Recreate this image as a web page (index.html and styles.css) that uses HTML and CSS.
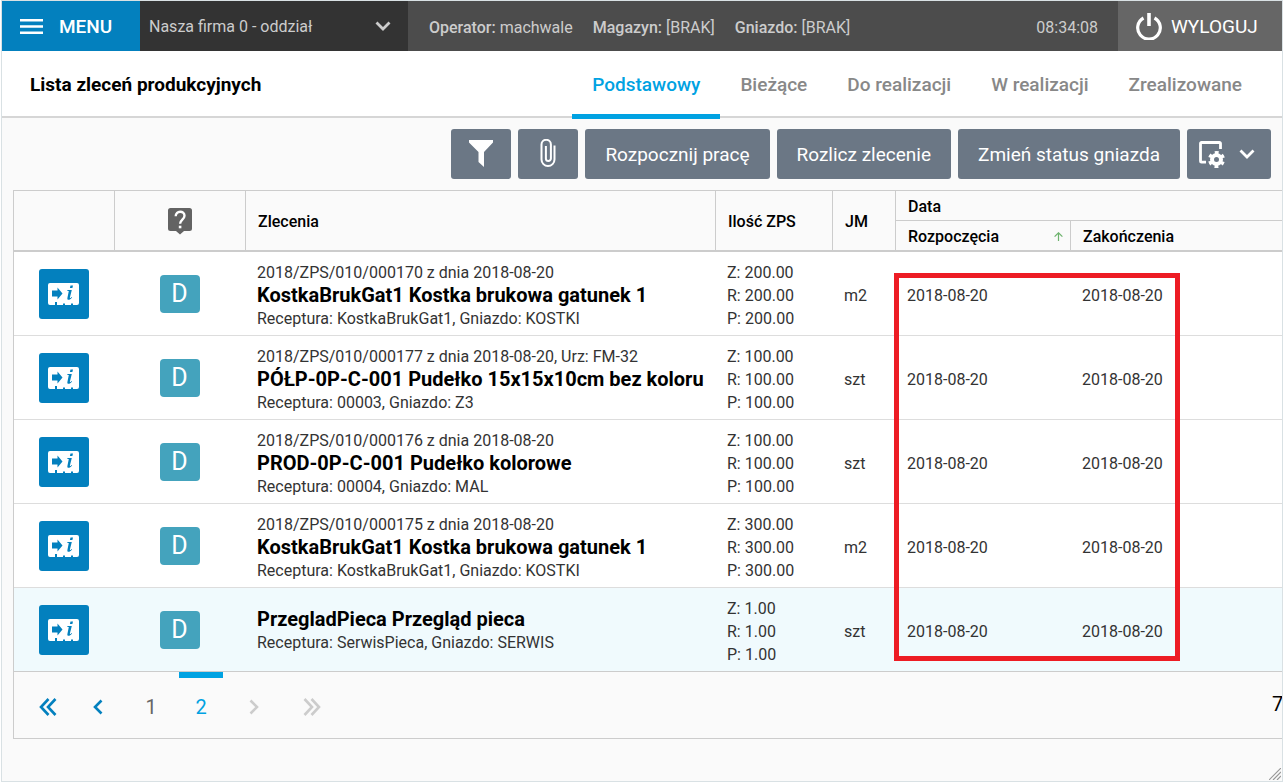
FILE: index.html
```html
<!DOCTYPE html>
<html lang="pl">
<head>
    <meta charset="UTF-8">
    <title>Lista zleceń produkcyjnych</title>
    <meta name="viewport" content="width=device-width, initial-scale=1">
    <link rel="stylesheet" href="styles.css">
</head>
<body>
    <!-- shared icons -->
    <svg class="sprite" aria-hidden="true">
        <symbol id="ticket" viewBox="0 0 31 22">
            <path fill="#fff" d="M2 0h27a2 2 0 0 1 2 2v18a2 2 0 0 1-2 2h-4v-1.500h-2v1.500h-6v-1.500h-2v1.500H9v-3H7v3H2a2 2 0 0 1-2-2V2a2 2 0 0 1 2-2z"/>
            <path fill="#0380be" d="M4 7.500h5.500v-3l5 6-5 6v-3H4z"/>
            <path fill="#0380be" d="M22.500 2.500h2.500l-.6 2.600h-2.500zM19.500 7h4.300l-1.900 7.500c-.2.900.4.900 1.700-.6l.5.500c-2.500 3.300-5.200 3-4.700.5L20.800 8h-1.500z"/>
        </symbol>
        <symbol id="chevron" viewBox="0 0 16 10">
            <path fill="none" stroke="currentColor" stroke-width="2.800" d="M1.500 1.500 8 8l6.500-6.500"/>
        </symbol>
    </svg>

    <div class="frame">
        <header class="topbar">
            <button type="button" class="menu">
                <svg width="23" height="15" viewBox="0 0 23 15"><path fill="#fff" d="M0 0h23v2.500H0zM0 6.250h23v2.500H0zM0 12.500h23V15H0z"/></svg>
                MENU
            </button>
            <div class="company">
                <select aria-label="Firma">
                    <option>Nasza firma 0 - oddział</option>
                </select>
                <svg class="arrow" width="16" height="10"><use href="#chevron"/></svg>
            </div>
            <div class="info">
                <span><b>Operator:</b> machwale</span>
                <span><b>Magazyn:</b> [BRAK]</span>
                <span><b>Gniazdo:</b> [BRAK]</span>
                <span class="clock">08:34:08</span>
            </div>
            <button type="button" class="logout">
                <svg width="26" height="27" viewBox="0 0 26 27"><path fill="none" stroke="#fff" stroke-width="3.200" d="M7.500 5a11.300 11.300 0 1 0 11 0"/><path fill="#fff" d="M11.200 0h3.600v13h-3.600z"/></svg>
                WYLOGUJ
            </button>
        </header>

        <div class="titlebar">
            <h1>Lista zleceń produkcyjnych</h1>
            <nav class="tabs">
                <a href="#" class="active">Podstawowy</a>
                <a href="#">Bieżące</a>
                <a href="#">Do realizacji</a>
                <a href="#">W realizacji</a>
                <a href="#">Zrealizowane</a>
            </nav>
        </div>

        <div class="toolbar">
            <button type="button" class="icon-btn" aria-label="Filtr">
                <svg width="24" height="27" viewBox="0 0 24 27"><path fill="#fff" d="M0 0h24v2.500L15 12v15l-5.500-5V12L0 2.500z"/></svg>
            </button>
            <button type="button" class="icon-btn" aria-label="Załączniki">
                <svg width="16" height="28" viewBox="0 0 16 28"><path fill="none" stroke="#fff" stroke-width="2" d="M14.500 6.500v14a6.500 6.500 0 0 1-13 0V5.500a4.700 4.700 0 0 1 9.400 0v14a2.500 2.500 0 0 1-5 0V7"/></svg>
            </button>
            <button type="button">Rozpocznij pracę</button>
            <button type="button">Rozlicz zlecenie</button>
            <button type="button">Zmień status gniazda</button>
            <button type="button" class="settings" aria-label="Ustawienia">
                <svg width="27" height="27" viewBox="0 0 27 27">
                    <path fill="none" stroke="#fff" stroke-width="2.800" stroke-linejoin="round" d="M21.500 8V2.500a1 1 0 0 0-1-1h-18a1 1 0 0 0-1 1v17.700a1 1 0 0 0 1 1H7"/>
                    <circle cx="17.500" cy="18.500" r="4.500" fill="none" stroke="#fff" stroke-width="4"/>
                    <circle cx="17.500" cy="18.500" r="7" fill="none" stroke="#fff" stroke-width="3" stroke-dasharray="3.665" stroke-dashoffset="1.833" transform="rotate(30 17.500 18.500)"/>
                </svg>
                <svg width="16" height="10"><use href="#chevron"/></svg>
            </button>
        </div>

        <main class="grid">
            <table>
                <colgroup>
                    <col class="c-action"><col class="c-status"><col class="c-order"><col class="c-qty"><col class="c-unit"><col class="c-date"><col>
                </colgroup>
                <thead>
                    <tr>
                        <th rowspan="2"></th>
                        <th rowspan="2" class="center">
                            <svg width="24" height="27" viewBox="0 0 24 27" role="img" aria-label="Status">
                                <path fill="#636363" d="M2.500 0h19A2.500 2.500 0 0 1 24 2.500v18a2.500 2.500 0 0 1-2.500 2.500H16l-4 3.500L8 23H2.500A2.500 2.500 0 0 1 0 20.500v-18A2.500 2.500 0 0 1 2.500 0z"/>
                                <path fill="none" stroke="#fff" stroke-width="2.400" d="M7.700 8.300c0-6 8.800-6 8.800-.6 0 3.800-4.400 4-4.400 8"/>
                                <path fill="#fff" d="M10.800 17.700h2.600v2.600h-2.600z"/>
                            </svg>
                        </th>
                        <th rowspan="2">Zlecenia</th>
                        <th rowspan="2">Ilość ZPS</th>
                        <th rowspan="2">JM</th>
                        <th colspan="2" class="group">Data</th>
                    </tr>
                    <tr>
                        <th><span class="sorted">Rozpoczęcia
                            <svg width="9" height="9" viewBox="0 0 9 9"><path fill="none" stroke="#6db36d" stroke-width="1.200" d="M4.500 9V1M.6 4.700 4.500.8l3.900 3.900"/></svg></span>
                        </th>
                        <th>Zakończenia</th>
                    </tr>
                </thead>
                <tbody>
                    <tr>
                        <td class="center"><button type="button" class="details" aria-label="Szczegóły"><svg width="31" height="22"><use href="#ticket"/></svg></button></td>
                        <td class="center"><span class="badge">D</span></td>
                        <td>2018/ZPS/010/000170 z dnia 2018-08-20<strong>KostkaBrukGat1 Kostka brukowa gatunek 1</strong>Receptura: KostkaBrukGat1, Gniazdo: KOSTKI</td>
                        <td>Z: 200.00<br>R: 200.00<br>P: 200.00</td>
                        <td>m2</td>
                        <td>2018-08-20</td>
                        <td>2018-08-20</td>
                    </tr>
                    <tr>
                        <td class="center"><button type="button" class="details" aria-label="Szczegóły"><svg width="31" height="22"><use href="#ticket"/></svg></button></td>
                        <td class="center"><span class="badge">D</span></td>
                        <td>2018/ZPS/010/000177 z dnia 2018-08-20, Urz: FM-32<strong>PÓŁP-0P-C-001 Pudełko 15x15x10cm bez koloru</strong>Receptura: 00003, Gniazdo: Z3</td>
                        <td>Z: 100.00<br>R: 100.00<br>P: 100.00</td>
                        <td>szt</td>
                        <td>2018-08-20</td>
                        <td>2018-08-20</td>
                    </tr>
                    <tr>
                        <td class="center"><button type="button" class="details" aria-label="Szczegóły"><svg width="31" height="22"><use href="#ticket"/></svg></button></td>
                        <td class="center"><span class="badge">D</span></td>
                        <td>2018/ZPS/010/000176 z dnia 2018-08-20<strong>PROD-0P-C-001 Pudełko kolorowe</strong>Receptura: 00004, Gniazdo: MAL</td>
                        <td>Z: 100.00<br>R: 100.00<br>P: 100.00</td>
                        <td>szt</td>
                        <td>2018-08-20</td>
                        <td>2018-08-20</td>
                    </tr>
                    <tr>
                        <td class="center"><button type="button" class="details" aria-label="Szczegóły"><svg width="31" height="22"><use href="#ticket"/></svg></button></td>
                        <td class="center"><span class="badge">D</span></td>
                        <td>2018/ZPS/010/000175 z dnia 2018-08-20<strong>KostkaBrukGat1 Kostka brukowa gatunek 1</strong>Receptura: KostkaBrukGat1, Gniazdo: KOSTKI</td>
                        <td>Z: 300.00<br>R: 300.00<br>P: 300.00</td>
                        <td>m2</td>
                        <td>2018-08-20</td>
                        <td>2018-08-20</td>
                    </tr>
                    <tr class="selected">
                        <td class="center"><button type="button" class="details" aria-label="Szczegóły"><svg width="31" height="22"><use href="#ticket"/></svg></button></td>
                        <td class="center"><span class="badge">D</span></td>
                        <td><strong>PrzegladPieca Przegląd pieca</strong>Receptura: SerwisPieca, Gniazdo: SERWIS</td>
                        <td>Z: 1.00<br>R: 1.00<br>P: 1.00</td>
                        <td>szt</td>
                        <td>2018-08-20</td>
                        <td>2018-08-20</td>
                    </tr>
                </tbody>
            </table>

            <nav class="pager">
                <div class="prev">
                    <a href="#" aria-label="Pierwsza"><svg width="18" height="18" viewBox="0 0 18 18"><path d="M9.500 1 2 9l7.500 8M16.500 1 9 9l7.500 8"/></svg></a>
                    <a href="#" aria-label="Poprzednia"><svg width="10" height="16" viewBox="0 0 10 16"><path d="M8.500 1.500 2 8l6.500 6.500"/></svg></a>
                </div>
                <div class="pages">
                    <a href="#">1</a>
                    <a href="#" class="current">2</a>
                </div>
                <div class="next">
                    <a href="#" aria-label="Następna"><svg width="10" height="16" viewBox="0 0 10 16"><path d="M1.500 1.500 8 8l-6.500 6.500"/></svg></a>
                    <a href="#" aria-label="Ostatnia"><svg width="18" height="18" viewBox="0 0 18 18"><path d="M1.500 1 9 9l-7.500 8M8.500 1 16 9l-7.500 8"/></svg></a>
                </div>
                <span class="total">7</span>
            </nav>

            <div class="marker"></div>
        </main>

        <svg class="grip" width="12" height="12" viewBox="0 0 12 12"><path stroke="#999" stroke-width="1.200" d="M0 12 12 0M4 12l8-8M8 12l4-4"/></svg>
    </div>
</body>
</html>
```

FILE: styles.css
```css
* {
    box-sizing: border-box;
}

body {
    margin: 0 1px;
    background: #fff;
    color: #333;
    font-family: Roboto, "Liberation Sans", sans-serif;
    font-size: 16px;
}

button, select {
    font-family: inherit;
    border: none;
    cursor: pointer;
}

a {
    text-decoration: none;
}

.sprite {
    display: none;
}

.frame {
    position: relative;
    min-height: calc(100vh - 1px);
    border: 1px solid #d9e1e4;
    background: #fafafa;
    overflow: hidden;
}

/* top bar */
.topbar {
    display: flex;
    height: 50px;
    background: #4c4c4c;
    color: #ccc;
}

.menu, .logout {
    display: flex;
    align-items: center;
    color: #fff;
}

.menu {
    width: 138px;
    padding: 0 18px;
    gap: 16px;
    background: #0380be;
    font-size: 19px;
    font-weight: 500;
}

.logout {
    width: 164px;
    padding: 0 18px;
    gap: 9px;
    background: #666;
    font-size: 19px;
}

.company {
    position: relative;
    width: 268px;
}

.company select {
    width: 100%;
    height: 100%;
    padding: 1px 9px 0;
    appearance: none;
    background: #333;
    color: #ccc;
    font-size: 16px;
}

.company .arrow {
    position: absolute;
    right: 17px;
    top: 20px;
    pointer-events: none;
}

.info {
    flex: 1;
    display: flex;
    align-items: center;
    gap: 20px;
    padding: 2px 20px 0 21px;
}

.info b {
    font-weight: 500;
}

.clock {
    margin-left: auto;
}

/* title and tabs */
.titlebar {
    display: flex;
    justify-content: space-between;
    height: 67px;
    padding: 0 20px 0 28px;
    border-bottom: 2px solid #d6d6d6;
    background: #fff;
}

h1 {
    margin: 0;
    color: #000;
    font-size: 19px;
    font-weight: 700;
    line-height: 67px;
}

.tabs {
    display: flex;
}

.tabs a {
    height: 68px;
    padding: 0 20px;
    color: #888;
    font-size: 19px;
    font-weight: 500;
    line-height: 67px;
}

.tabs .active {
    border-bottom: 5px solid #00a2e2;
    color: #00a2e2;
}

/* toolbar */
.toolbar {
    display: flex;
    justify-content: flex-end;
    gap: 7px;
    padding: 11px;
}

.toolbar button {
    display: flex;
    align-items: center;
    justify-content: center;
    height: 50px;
    padding: 0 20px;
    border-radius: 3px;
    background: #6b7785;
    color: #fff;
    font-size: 19px;
}

.toolbar .icon-btn {
    width: 60px;
    padding: 0 0 2px;
}

.toolbar .settings {
    width: 84px;
    padding: 0 5px 0 0;
    gap: 13px;
}

/* orders */
.grid {
    position: relative;
    margin-left: 11px;
    border: 1px solid #ccc;
    border-right: none;
}

table {
    width: 100%;
    table-layout: fixed;
    border-spacing: 0;
}

.c-action { width: 101px; }
.c-status { width: 131px; }
.c-order { width: 470px; }
.c-qty { width: 117px; }
.c-unit { width: 63px; }
.c-date { width: 175px; }

th {
    height: 31px;
    padding: 2px 12px 0;
    border-right: 1px solid #ccc;
    border-bottom: 2px solid #ccc;
    color: #000;
    font-size: 16px;
    font-weight: 500;
    text-align: left;
}

th:last-child {
    border-right: none;
}

th.group {
    height: 30px;
    border-bottom-width: 1px;
}

.sorted {
    display: flex;
    align-items: center;
    justify-content: space-between;
    margin-right: -5px;
}

td {
    height: 84px;
    padding: 3px 0 0 11px;
    border-bottom: 1px solid #ddd;
    background: #fff;
    line-height: 23px;
    white-space: nowrap;
}

td strong {
    display: block;
    color: #000;
    font-size: 20px;
    font-weight: 700;
}

th.center {
    padding: 2px 0 0;
    text-align: center;
}

td.center {
    padding: 0 2px 0 0;
    text-align: center;
}

th svg, td svg {
    vertical-align: middle;
}

.selected td {
    background: #f0fafd;
    border-bottom-color: #ccc;
}

.details {
    width: 50px;
    height: 50px;
    padding: 0;
    border-radius: 3px;
    background: #0380be;
    vertical-align: middle;
}

.badge {
    display: inline-block;
    width: 40px;
    height: 38px;
    border-radius: 4px;
    background: #44a3bd;
    color: #fff;
    font-size: 25px;
    line-height: 38px;
    vertical-align: middle;
}

.marker {
    position: absolute;
    left: 880px;
    top: 82px;
    width: 286px;
    height: 388px;
    border: 5px solid #ed1c24;
    pointer-events: none;
}

/* paging */
.pager {
    display: flex;
    gap: 9px;
    height: 66px;
    padding-left: 12px;
    font-size: 20px;
}

.pager div {
    display: flex;
}

.pager a {
    display: flex;
    align-items: center;
    justify-content: center;
    width: 44px;
    padding-top: 4px;
    color: #666;
}

.pager path {
    fill: none;
    stroke: currentColor;
    stroke-width: 2.6;
}

.pager .prev, .pager .pages {
    gap: 6px;
}

.pager .next {
    gap: 14px;
}

.pager .prev a {
    color: #0380be;
    padding-top: 3px;
}

.pager .next a {
    color: #ccc;
    padding-top: 3px;
}

.pager .current {
    padding-bottom: 2px;
    border-top: 6px solid #00a2e2;
    padding-top: 0;
    color: #00a2e2;
}

.total {
    width: 10px;
    margin-left: auto;
    color: #000;
    line-height: 65px;
}

.grip {
    position: absolute;
    right: 1px;
    bottom: 1px;
}
```
